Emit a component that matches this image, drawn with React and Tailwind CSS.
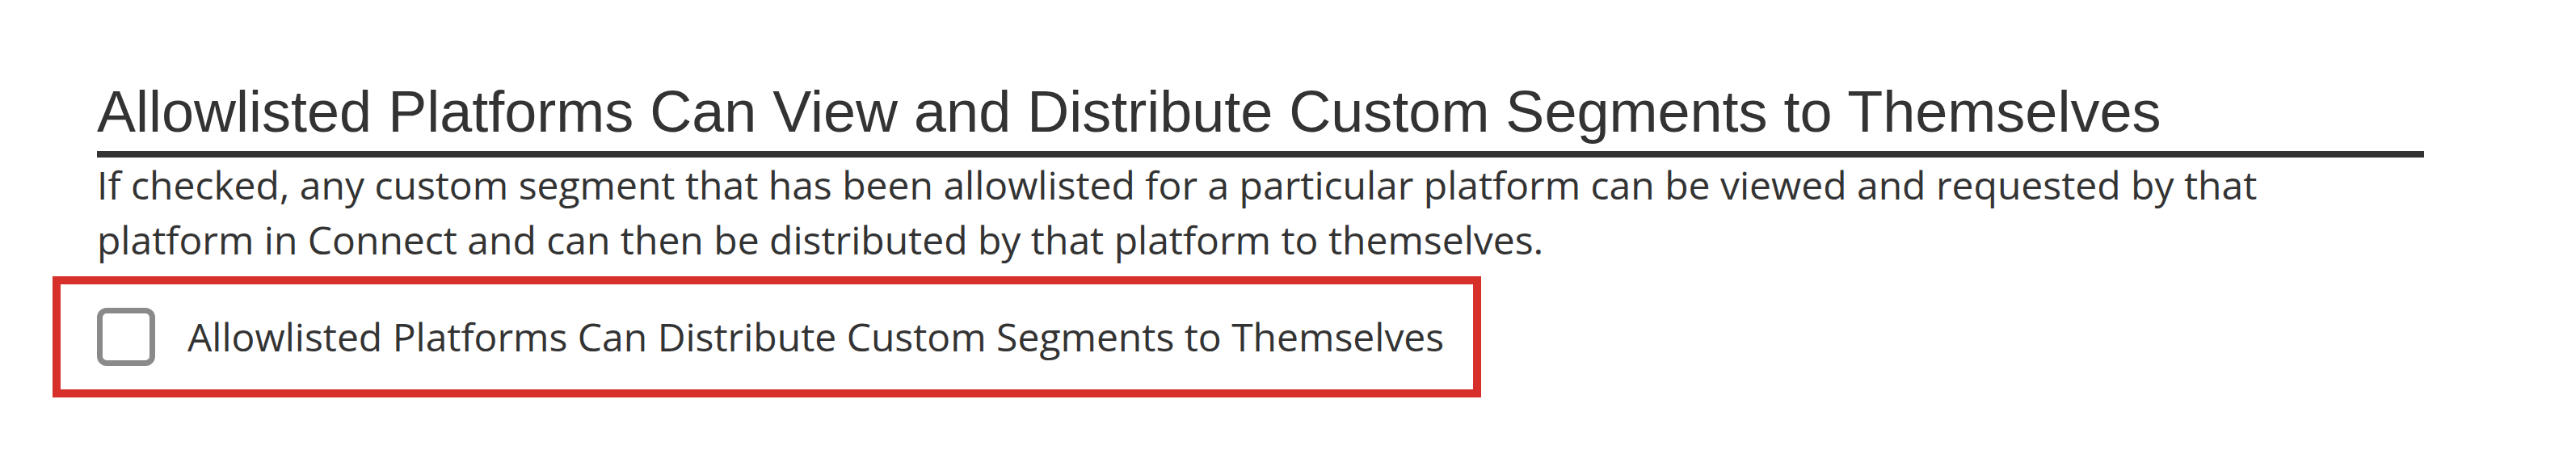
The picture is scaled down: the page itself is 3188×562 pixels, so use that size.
import { useState } from "react";

export default function App() {
  const [checked, setChecked] = useState(false);

  return (
    <div className="min-h-[562px] w-full bg-white pl-[120px] pt-[98px] text-[#333]">
      <div className="w-[2880px]">
        {/* Section title */}
        <h2 className="border-b-[8px] border-[#333] pb-[9px] font-['Liberation_Sans',Arial,sans-serif] text-[72px] leading-[80px] font-normal">
          Allowlisted Platforms Can View and Distribute Custom Segments to Themselves
        </h2>

        <p className="w-[2720px] font-['Open_Sans',sans-serif] text-[48px] leading-[68px]">
          If checked, any custom segment that has been allowlisted for a particular platform can be viewed and requested by that
          platform in Connect and can then be distributed by that platform to themselves.
        </p>

        {/* Option row, outlined in red */}
        <label className="mt-[11px] -ml-[55px] flex h-[150px] w-[1768px] cursor-pointer items-center border-[10px] border-[#d7302a] pl-[45px]">
          <input
            type="checkbox"
            checked={checked}
            onChange={(e) => setChecked(e.target.checked)}
            className="sr-only"
          />
          <span className="flex h-[72px] w-[72px] shrink-0 items-center justify-center rounded-[12px] border-[7px] border-[#8a8a8a] bg-white">
            {checked && (
              <svg viewBox="0 0 24 24" className="h-[48px] w-[48px]" fill="none" stroke="#8a8a8a" strokeWidth="3">
                <path d="M5 12l5 5 9-10" />
              </svg>
            )}
          </span>
          <span className="ml-[40px] font-['Open_Sans',sans-serif] text-[48px] leading-[68px]">
            Allowlisted Platforms Can Distribute Custom Segments to Themselves
          </span>
        </label>
      </div>
    </div>
  );
}
